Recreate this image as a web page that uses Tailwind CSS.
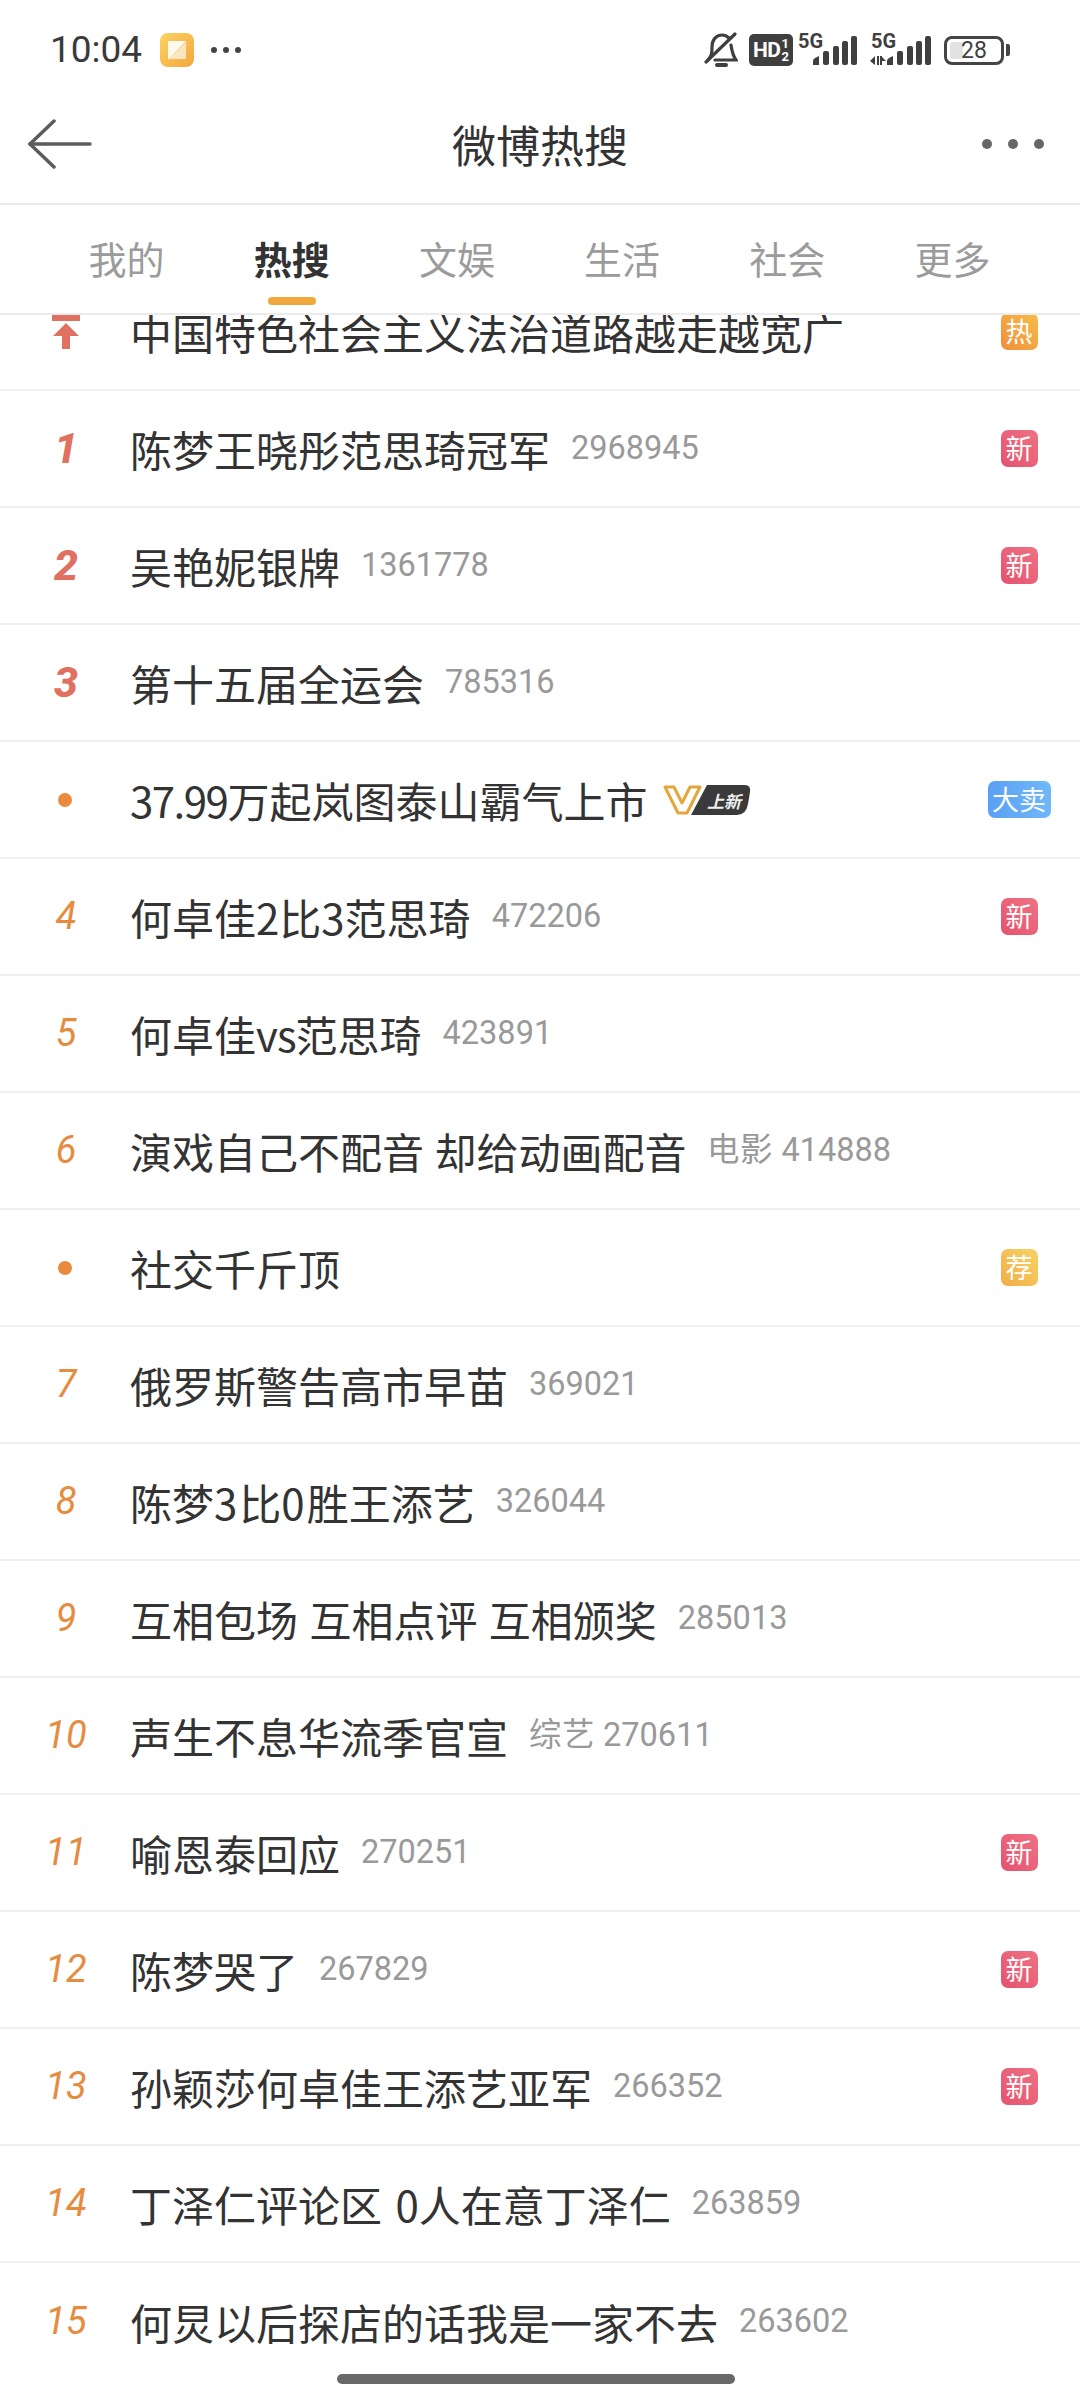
<!DOCTYPE html>
<html lang="zh-CN">
<head>
<meta charset="UTF-8">
<meta name="viewport" content="width=device-width, initial-scale=1.0">
<title>微博热搜</title>
<script src="https://cdn.jsdelivr.net/npm/@tailwindcss/browser@4"></script>
</head>
<body class="bg-white font-['Noto_Sans_CJK_SC','Noto_Sans',sans-serif] text-[#333]">
<div class="w-[1080px] h-[2400px] overflow-hidden relative flex flex-col">

    <!-- Status bar -->
    <div class="h-[100px] shrink-0 flex items-center pl-[50px] pr-[70px]">
        <span class="font-['Roboto',sans-serif] text-[37px] text-[#3a3a3a] w-[110px]">10:04</span>
        <div class="w-[34px] h-[34px] rounded-[8px] bg-gradient-to-br from-[#fbd360] to-[#f3a63f] flex items-center justify-center">
            <svg width="22" height="22" viewBox="0 0 22 22"><path d="M3 20 L20 3 V20 Z" fill="#fff" fill-opacity=".65"/><path d="M2 21 V2 H20 Z" fill="#fff" fill-opacity=".9"/></svg>
        </div>
        <svg class="ml-[17px]" width="30" height="8" viewBox="0 0 30 8" fill="#444"><circle cx="3" cy="4" r="3"/><circle cx="15" cy="4" r="3"/><circle cx="27" cy="4" r="3"/></svg>
        <div class="flex-1"></div>
        <!-- muted bell -->
        <svg width="34" height="36" viewBox="0 0 34 36" fill="none" stroke="#3f3f3f" stroke-width="3.2" stroke-linecap="round"><path d="M4 28 C8 24 8 20 8 15 C8 8 12 3 18 3 C21 3 23 4 25 6"/><path d="M27 13 C28 20 29 24 32 28 H11"/><path d="M2 30 L31 2"/><path d="M13 33 H22" stroke-width="4"/></svg>
        <div class="ml-[11px] w-[44px] h-[32px] rounded-[5px] bg-[#3f3f3f] flex items-center pl-[4px] text-white font-['Roboto',sans-serif] font-bold leading-none">
            <span class="text-[21px] tracking-[-0.5px]">HD</span>
            <span class="flex flex-col text-[13px] leading-[13px] ml-[1px] text-center"><span>1</span><span>2</span></span>
        </div>
        <div class="ml-[5px] w-[60px] h-[32px] relative">
            <span class="absolute left-0 top-[-3px] font-['Roboto',sans-serif] font-bold text-[20px] leading-[20px] text-[#3f3f3f]">5G</span>
            <svg class="absolute left-[15px] top-[2px]" width="45" height="30" viewBox="0 0 45 30" fill="#3f3f3f"><path d="M0 29 V25 Q0 23 2 22 L6 20 V29 Z"/><rect x="10" y="15" width="6" height="14" rx="2"/><rect x="20" y="10" width="6" height="19" rx="2"/><rect x="29" y="5" width="6" height="24" rx="2"/><rect x="38" y="0" width="6" height="29" rx="2"/></svg>
        </div>
        <div class="ml-[12px] w-[62px] h-[32px] relative">
            <span class="absolute left-[1px] top-[-3px] font-['Roboto',sans-serif] font-bold text-[20px] leading-[20px] text-[#3f3f3f]">5G</span>
            <svg class="absolute left-0 top-[2px]" width="62" height="30" viewBox="0 0 62 30" fill="#3f3f3f"><path d="M0 25 L5 20 V29 Z M7 20 H9 V29 H7 Z M10 20 H12 V29 H10 Z M12 21 L16 25 H12 Z"/><path d="M17 29 V25 Q17 23 19 22 L23 20 V29 Z"/><rect x="27" y="15" width="6" height="14" rx="2"/><rect x="37" y="10" width="6" height="19" rx="2"/><rect x="46" y="5" width="6" height="24" rx="2"/><rect x="55" y="0" width="6" height="29" rx="2"/></svg>
        </div>
        <div class="ml-[12px] w-[60px] h-[29px] rounded-[8px] border-[3px] border-[#444] relative flex items-center justify-center">
            <div class="absolute left-[3px] top-[3px] bottom-[3px] w-[13px] bg-[#e2e2e2] rounded-[3px]"></div>
            <span class="relative font-['Roboto',sans-serif] text-[23px] leading-none text-[#3f3f3f]">28</span>
        </div>
        <div class="ml-[2px] w-[4px] h-[12px] bg-[#444] rounded-r-[2px]"></div>
    </div>

    <!-- Title bar -->
    <div class="h-[105px] shrink-0 flex items-center justify-between border-b-2 border-[#ececec] pb-[16px] pl-[28px] pr-[36px] relative">
        <svg width="64" height="50" viewBox="0 0 64 50" fill="none" stroke="#5c5c5c" stroke-width="3.5" stroke-linecap="round" stroke-linejoin="round"><path d="M26 2 L2 25 L26 48"/><path d="M2 25 H62"/></svg>
        <h1 class="absolute left-0 right-0 text-center text-[44px] font-normal text-[#333] leading-none">微博热搜</h1>
        <svg width="62" height="10" viewBox="0 0 62 10" fill="#666"><circle cx="5" cy="5" r="5"/><circle cx="31" cy="5" r="5"/><circle cx="57" cy="5" r="5"/></svg>
    </div>

    <!-- Tabs -->
    <div class="h-[110px] shrink-0 border-b-2 border-[#ececec] grid grid-cols-6 pl-[44px] pr-[45px] text-[38px] text-[#9b9b9b]">
        <a class="flex items-start justify-center pt-[24px]">我的</a>
        <a class="relative flex items-start justify-center pt-[24px] font-bold text-[#333]">热搜<span class="absolute top-[92px] left-1/2 -translate-x-1/2 w-[48px] h-[8px] rounded-full bg-[#f0a83c]"></span></a>
        <a class="flex items-start justify-center pt-[24px]">文娱</a>
        <a class="flex items-start justify-center pt-[24px]">生活</a>
        <a class="flex items-start justify-center pt-[24px]">社会</a>
        <a class="flex items-start justify-center pt-[24px]">更多</a>
    </div>

    <!-- Hot list -->
    <div class="flex-1 overflow-hidden">
        <ul class="-mt-[41px]">
            <li class="h-[117px] flex items-center border-b-2 border-[#f0f0f0]">
                <div class="w-[130px] shrink-0 flex justify-center pl-[1px]"><svg width="28" height="34" viewBox="0 0 28 34" fill="#e0705f"><rect x="0" y="0" width="28" height="6"/><path d="M14 8 L27 21 H18 V34 H10 V21 H1 Z"/></svg></div>
                <div class="flex-1 text-[42px] leading-none">中国特色社会主义法治道路越走越宽广</div>
                <div class="w-[80px] mr-[21px] flex justify-center"><span class="w-[37px] h-[37px] rounded-[7px] bg-gradient-to-tr from-[#ef8f3a] to-[#f6bc4b] text-white text-[27px] leading-[35px] text-center">热</span></div>
            </li>
            <li class="h-[117px] flex items-center border-b-2 border-[#f0f0f0]">
                <div class="w-[130px] shrink-0 pl-[2px] text-center font-['Roboto',sans-serif] italic font-extrabold text-[43px] text-[#e0705f]">1</div>
                <div class="flex-1 flex items-center"><span class="text-[42px] leading-none">陈梦王晓彤范思琦冠军</span><span class="ml-[21px] font-['Roboto',sans-serif] text-[32.5px] text-[#999]">2968945</span></div>
                <div class="w-[80px] mr-[21px] flex justify-center"><span class="w-[37px] h-[37px] rounded-[7px] bg-gradient-to-tr from-[#e5536f] to-[#ee7184] text-white text-[27px] leading-[35px] text-center">新</span></div>
            </li>
            <li class="h-[117px] flex items-center border-b-2 border-[#f0f0f0]">
                <div class="w-[130px] shrink-0 pl-[2px] text-center font-['Roboto',sans-serif] italic font-extrabold text-[43px] text-[#e0705f]">2</div>
                <div class="flex-1 flex items-center"><span class="text-[42px] leading-none">吴艳妮银牌</span><span class="ml-[21px] font-['Roboto',sans-serif] text-[32.5px] text-[#999]">1361778</span></div>
                <div class="w-[80px] mr-[21px] flex justify-center"><span class="w-[37px] h-[37px] rounded-[7px] bg-gradient-to-tr from-[#e5536f] to-[#ee7184] text-white text-[27px] leading-[35px] text-center">新</span></div>
            </li>
            <li class="h-[117px] flex items-center border-b-2 border-[#f0f0f0]">
                <div class="w-[130px] shrink-0 pl-[2px] text-center font-['Roboto',sans-serif] italic font-extrabold text-[43px] text-[#e0705f]">3</div>
                <div class="flex-1 flex items-center"><span class="text-[42px] leading-none">第十五届全运会</span><span class="ml-[21px] font-['Roboto',sans-serif] text-[32.5px] text-[#999]">785316</span></div>
            </li>
            <li class="h-[117px] flex items-center border-b-2 border-[#f0f0f0]">
                <div class="w-[130px] shrink-0 flex justify-center"><span class="w-[14px] h-[14px] rounded-full bg-[#ea8a3e]"></span></div>
                <div class="flex-1 flex items-center"><span class="text-[42px] leading-none"><span class="tracking-[-1.5px]">37.99</span>万起岚图泰山霸气上市</span>
                    <svg class="ml-[16px]" width="88" height="32" viewBox="0 0 88 32">
                        <path d="M44 1 H82 Q88 1 87 8 L85 20 Q83 31 74 31 H28 Z" fill="#3a3a3a"/>
                        <path d="M2 3 H11 L19 19 L27 3 H37 L24 29 H15 Z" fill="#fff" stroke="#e3a63a" stroke-width="3" stroke-linejoin="round"/>
                        <text x="44" y="24" font-size="17" font-weight="700" font-style="italic" fill="#eee" font-family="Noto Sans CJK SC">上新</text>
                    </svg>
                </div>
                <div class="w-[80px] mr-[21px] flex justify-center"><span class="w-[63px] h-[37px] rounded-[7px] bg-gradient-to-r from-[#5ba0f5] to-[#6fb8f8] text-white text-[27px] leading-[35px] text-center shrink-0">大卖</span></div>
            </li>
            <li class="h-[117px] flex items-center border-b-2 border-[#f0f0f0]">
                <div class="w-[130px] shrink-0 pl-[2px] text-center font-['Roboto',sans-serif] italic text-[38px] text-[#e58c3f]">4</div>
                <div class="flex-1 flex items-center"><span class="text-[42px] leading-none">何卓佳2比3范思琦</span><span class="ml-[21px] font-['Roboto',sans-serif] text-[32.5px] text-[#999]">472206</span></div>
                <div class="w-[80px] mr-[21px] flex justify-center"><span class="w-[37px] h-[37px] rounded-[7px] bg-gradient-to-tr from-[#e5536f] to-[#ee7184] text-white text-[27px] leading-[35px] text-center">新</span></div>
            </li>
            <li class="h-[117px] flex items-center border-b-2 border-[#f0f0f0]">
                <div class="w-[130px] shrink-0 pl-[2px] text-center font-['Roboto',sans-serif] italic text-[38px] text-[#e58c3f]">5</div>
                <div class="flex-1 flex items-center"><span class="text-[42px] leading-none">何卓佳<span class="tracking-[-1px]">vs</span>范思琦</span><span class="ml-[21px] font-['Roboto',sans-serif] text-[32.5px] text-[#999]">423891</span></div>
            </li>
            <li class="h-[117px] flex items-center border-b-2 border-[#f0f0f0]">
                <div class="w-[130px] shrink-0 pl-[2px] text-center font-['Roboto',sans-serif] italic text-[38px] text-[#e58c3f]">6</div>
                <div class="flex-1 flex items-center"><span class="text-[42px] leading-none [word-spacing:1px]">演戏自己不配音 却给动画配音</span><span class="ml-[21px] font-['Roboto',sans-serif] text-[32.5px] text-[#999]">电影 414888</span></div>
            </li>
            <li class="h-[117px] flex items-center border-b-2 border-[#f0f0f0]">
                <div class="w-[130px] shrink-0 flex justify-center"><span class="w-[14px] h-[14px] rounded-full bg-[#ea8a3e]"></span></div>
                <div class="flex-1 flex items-center"><span class="text-[42px] leading-none">社交千斤顶</span></div>
                <div class="w-[80px] mr-[21px] flex justify-center"><span class="w-[37px] h-[37px] rounded-[7px] bg-gradient-to-tr from-[#f0ae45] to-[#f8d266] text-white text-[27px] leading-[35px] text-center">荐</span></div>
            </li>
            <li class="h-[117px] flex items-center border-b-2 border-[#f0f0f0]">
                <div class="w-[130px] shrink-0 pl-[2px] text-center font-['Roboto',sans-serif] italic text-[38px] text-[#e58c3f]">7</div>
                <div class="flex-1 flex items-center"><span class="text-[42px] leading-none">俄罗斯警告高市早苗</span><span class="ml-[21px] font-['Roboto',sans-serif] text-[32.5px] text-[#999]">369021</span></div>
            </li>
            <li class="h-[117px] flex items-center border-b-2 border-[#f0f0f0]">
                <div class="w-[130px] shrink-0 pl-[2px] text-center font-['Roboto',sans-serif] italic text-[38px] text-[#e58c3f]">8</div>
                <div class="flex-1 flex items-center"><span class="text-[42px] leading-none">陈梦<span class="tracking-[2px]">3</span>比<span class="tracking-[2px]">0</span>胜王添艺</span><span class="ml-[21px] font-['Roboto',sans-serif] text-[32.5px] text-[#999]">326044</span></div>
            </li>
            <li class="h-[117px] flex items-center border-b-2 border-[#f0f0f0]">
                <div class="w-[130px] shrink-0 pl-[2px] text-center font-['Roboto',sans-serif] italic text-[38px] text-[#e58c3f]">9</div>
                <div class="flex-1 flex items-center"><span class="text-[42px] leading-none [word-spacing:2px]">互相包场 互相点评 互相颁奖</span><span class="ml-[21px] font-['Roboto',sans-serif] text-[32.5px] text-[#999]">285013</span></div>
            </li>
            <li class="h-[117px] flex items-center border-b-2 border-[#f0f0f0]">
                <div class="w-[130px] shrink-0 pl-[2px] text-center font-['Roboto',sans-serif] italic text-[38px] text-[#e58c3f]">10</div>
                <div class="flex-1 flex items-center"><span class="text-[42px] leading-none">声生不息华流季官宣</span><span class="ml-[21px] font-['Roboto',sans-serif] text-[32.5px] text-[#999]">综艺 270611</span></div>
            </li>
            <li class="h-[117px] flex items-center border-b-2 border-[#f0f0f0]">
                <div class="w-[130px] shrink-0 pl-[2px] text-center font-['Roboto',sans-serif] italic text-[38px] text-[#e58c3f]">11</div>
                <div class="flex-1 flex items-center"><span class="text-[42px] leading-none">喻恩泰回应</span><span class="ml-[21px] font-['Roboto',sans-serif] text-[32.5px] text-[#999]">270251</span></div>
                <div class="w-[80px] mr-[21px] flex justify-center"><span class="w-[37px] h-[37px] rounded-[7px] bg-gradient-to-tr from-[#e5536f] to-[#ee7184] text-white text-[27px] leading-[35px] text-center">新</span></div>
            </li>
            <li class="h-[117px] flex items-center border-b-2 border-[#f0f0f0]">
                <div class="w-[130px] shrink-0 pl-[2px] text-center font-['Roboto',sans-serif] italic text-[38px] text-[#e58c3f]">12</div>
                <div class="flex-1 flex items-center"><span class="text-[42px] leading-none">陈梦哭了</span><span class="ml-[21px] font-['Roboto',sans-serif] text-[32.5px] text-[#999]">267829</span></div>
                <div class="w-[80px] mr-[21px] flex justify-center"><span class="w-[37px] h-[37px] rounded-[7px] bg-gradient-to-tr from-[#e5536f] to-[#ee7184] text-white text-[27px] leading-[35px] text-center">新</span></div>
            </li>
            <li class="h-[117px] flex items-center border-b-2 border-[#f0f0f0]">
                <div class="w-[130px] shrink-0 pl-[2px] text-center font-['Roboto',sans-serif] italic text-[38px] text-[#e58c3f]">13</div>
                <div class="flex-1 flex items-center"><span class="text-[42px] leading-none">孙颖莎何卓佳王添艺亚军</span><span class="ml-[21px] font-['Roboto',sans-serif] text-[32.5px] text-[#999]">266352</span></div>
                <div class="w-[80px] mr-[21px] flex justify-center"><span class="w-[37px] h-[37px] rounded-[7px] bg-gradient-to-tr from-[#e5536f] to-[#ee7184] text-white text-[27px] leading-[35px] text-center">新</span></div>
            </li>
            <li class="h-[117px] flex items-center border-b-2 border-[#f0f0f0]">
                <div class="w-[130px] shrink-0 pl-[2px] text-center font-['Roboto',sans-serif] italic text-[38px] text-[#e58c3f]">14</div>
                <div class="flex-1 flex items-center"><span class="text-[42px] leading-none [word-spacing:4px]">丁泽仁评论区 0人在意丁泽仁</span><span class="ml-[21px] font-['Roboto',sans-serif] text-[32.5px] text-[#999]">263859</span></div>
            </li>
            <li class="h-[117px] flex items-center">
                <div class="w-[130px] shrink-0 pl-[2px] text-center font-['Roboto',sans-serif] italic text-[38px] text-[#e58c3f]">15</div>
                <div class="flex-1 flex items-center"><span class="text-[42px] leading-none">何炅以后探店的话我是一家不去</span><span class="ml-[21px] font-['Roboto',sans-serif] text-[32.5px] text-[#999]">263602</span></div>
            </li>
        </ul>
    </div>

    <!-- Home indicator -->
    <div class="absolute bottom-[16px] left-[337px] w-[398px] h-[10px] rounded-full bg-[#696969]"></div>
</div>
</body>
</html>
